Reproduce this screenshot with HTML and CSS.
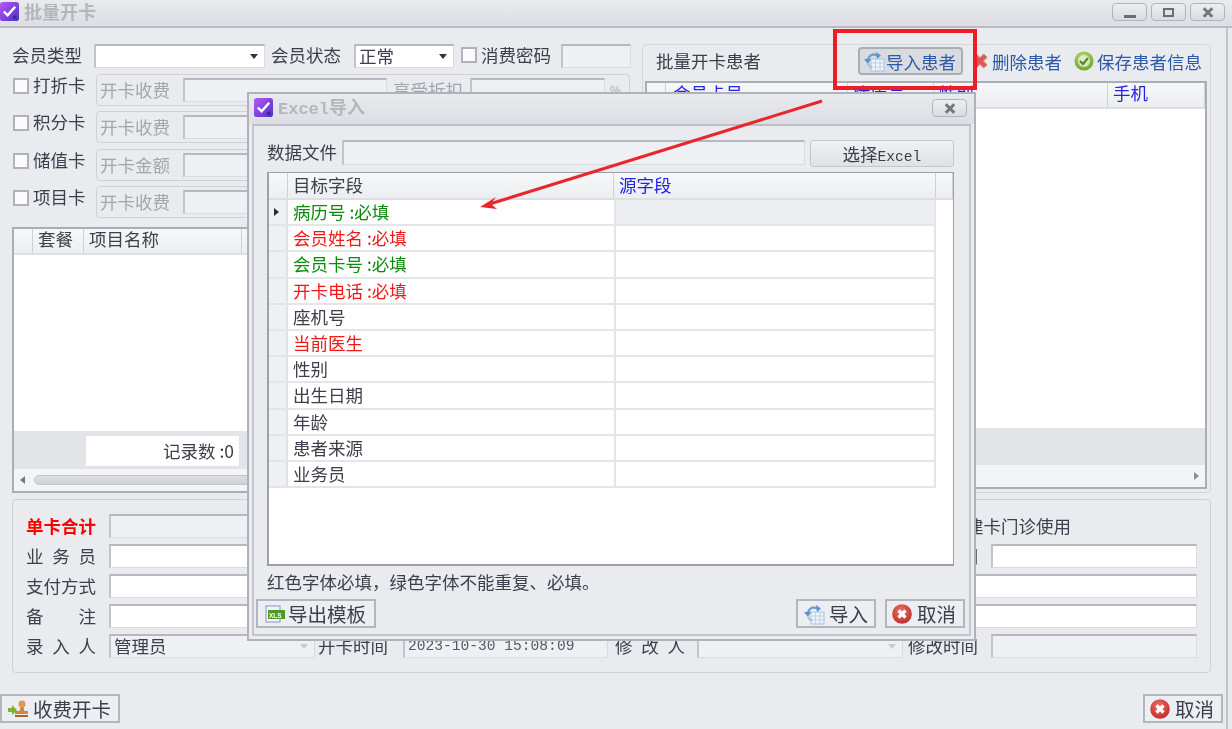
FILE: index.html
```html
<!DOCTYPE html>
<html lang="zh-CN">
<head>
<meta charset="utf-8">
<title>批量开卡</title>
<link rel="stylesheet" href="styles.css">
</head>
<body>
<svg class="defs" width="0" height="0">
  <defs>
    <linearGradient id="pg" x1="0" y1="0" x2="1" y2="1"><stop offset="0" stop-color="#b45cf5"/><stop offset="1" stop-color="#4f2fc8"/></linearGradient>
    <radialGradient id="rg" cx=".45" cy=".35" r=".75"><stop offset="0" stop-color="#f0716a"/><stop offset="1" stop-color="#b9231f"/></radialGradient>
    <radialGradient id="gg" cx=".45" cy=".35" r=".75"><stop offset="0" stop-color="#c5e27a"/><stop offset="1" stop-color="#5f9a22"/></radialGradient>
    <symbol id="i-app" viewBox="0 0 20 20">
      <rect x="0" y="0" width="20" height="20" rx="3" fill="url(#pg)"/>
      <path d="M4 10l4 4 8-9" fill="none" stroke="#fff" stroke-width="2.6"/>
      <circle cx="15.500" cy="16" r="2" fill="#3b2a9c"/>
    </symbol>
    <symbol id="i-import" viewBox="0 0 22 22">
      <rect x="8" y="9" width="13" height="12" fill="#eef4fb" stroke="#a9c2de"/>
      <path d="M8 13h13M8 17h13M12.500 9v12M17 9v12" stroke="#bcd0e6" stroke-width="1"/>
      <path d="M15 6C10 3 6 5 5 10" fill="none" stroke="#6a9fd6" stroke-width="2.4"/>
      <path d="M13 2l5 3.500-4 3.500zM1 9l4 5 3-5z" fill="#5a94cf"/>
      <path d="M5 14c1 2 2 3 4 4" fill="none" stroke="#9cc3e6" stroke-width="2"/>
    </symbol>
    <symbol id="i-del" viewBox="0 0 18 18">
      <path d="M3.500 3.500L14.500 14.500M14.500 3.500L3.500 14.500" stroke="#cfc9c6" stroke-width="6.500"/>
      <path d="M3.500 3.500L14.500 14.500M14.500 3.500L3.500 14.500" stroke="#dc5a52" stroke-width="4.500"/>
    </symbol>
    <symbol id="i-ok" viewBox="0 0 20 20">
      <circle cx="10" cy="10" r="9.500" fill="url(#gg)"/>
      <circle cx="10" cy="10" r="6" fill="#eef3e0" opacity=".75"/>
      <path d="M6 10l3 3 5-6" fill="none" stroke="#4f7f2a" stroke-width="2"/>
    </symbol>
    <symbol id="i-cancel" viewBox="0 0 20 20">
      <circle cx="10" cy="10" r="9.800" fill="url(#rg)"/>
      <path d="M6.500 6.500l7 7M13.500 6.500l-7 7" stroke="#fff" stroke-width="3.200"/>
    </symbol>
    <symbol id="i-xls" viewBox="0 0 20 18">
      <rect x="1" y="1" width="14" height="16" fill="#f2f5fb" stroke="#7f95c9"/>
      <rect x="3" y="5" width="17" height="9" fill="#4f9a22"/>
      <text x="4" y="12.500" class="xls-t">XLS</text>
    </symbol>
    <symbol id="i-stamp" viewBox="0 0 22 18">
      <circle cx="15" cy="4" r="3.500" fill="#d99a5a"/>
      <path d="M13.500 7h3l1 4h3.500v3h-13v-3h4.500z" fill="#d0873f"/>
      <rect x="8" y="15" width="13" height="2" fill="#a8652a"/>
      <path d="M1 8h4V5l5 5-5 5v-3H1z" fill="#7db52f"/>
    </symbol>
  </defs>
</svg>

<div class="window">
  <header class="titlebar">
    <svg class="ic-app"><use href="#i-app"/></svg>
    <span class="win-title">批量开卡</span>
    <div class="win-btns">
      <button class="wbtn"><i class="g-min"></i></button>
      <button class="wbtn"><i class="g-max"></i></button>
      <button class="wbtn"><span class="g-x"></span></button>
    </div>
  </header>

  <main class="client">
    <div class="top">
      <section class="left">
        <div class="row-type">
          <span class="lb">会员类型</span>
          <div class="combo c-type"></div>
          <span class="lb">会员状态</span>
          <div class="combo c-state">正常</div>
          <span class="chk"></span>
          <span class="lb">消费密码</span>
          <div class="inp dis w70"></div>
        </div>
        <div class="card-row">
          <span class="chk"></span><span class="lb card-lb">打折卡</span>
          <div class="gbox">
            <span class="lb gray gl">开卡收费</span><div class="inp dis w204"></div>
            <span class="lb gray dl">享受折扣</span><div class="inp dis w135"></div><span class="lb gray pct">%</span>
          </div>
        </div>
        <div class="card-row">
          <span class="chk"></span><span class="lb card-lb">积分卡</span>
          <div class="gbox"><span class="lb gray gl">开卡收费</span><div class="inp dis w204"></div></div>
        </div>
        <div class="card-row">
          <span class="chk"></span><span class="lb card-lb">储值卡</span>
          <div class="gbox"><span class="lb gray gl">开卡金额</span><div class="inp dis w204"></div></div>
        </div>
        <div class="card-row">
          <span class="chk"></span><span class="lb card-lb">项目卡</span>
          <div class="gbox"><span class="lb gray gl">开卡收费</span><div class="inp dis w204"></div></div>
        </div>
        <div class="grid left-grid">
          <div class="g-head lg-cols">
            <span></span><span>套餐</span><span>项目名称</span><span></span>
          </div>
          <div class="g-body"></div>
          <div class="g-foot"><div class="count">记录数 :0</div></div>
          <div class="g-scroll"><i class="arr-l"></i><div class="thumb"></div></div>
        </div>
      </section>

      <section class="right">
        <div class="toolbar">
          <span class="lb tb-title">批量开卡患者</span>
          <button class="tbtn pressed"><svg class="ic22"><use href="#i-import"/></svg>导入患者</button>
          <button class="tbtn t-del"><svg class="ic18"><use href="#i-del"/></svg>删除患者</button>
          <button class="tbtn t-save"><svg class="ic20"><use href="#i-ok"/></svg>保存患者信息</button>
        </div>
        <div class="grid right-grid">
          <div class="g-head rg-cols blue">
            <span></span><span>会员卡号</span><span>病历号</span><span>性别</span><span>手机</span>
          </div>
          <div class="g-body"></div>
          <div class="g-foot short"></div>
          <div class="g-scroll end"><i class="arr-r"></i></div>
        </div>
      </section>
    </div>

    <section class="bottom">
      <span class="lb red">单卡合计</span><div class="inp dis"></div>
      <span class="lb last-wide">建卡门诊使用</span>

      <span class="lb sp">业 务 员</span><div class="inp"></div>
      <span class="lb c7">有效日期</span><div class="inp"></div>

      <span class="lb sp">支付方式</span><div class="inp"></div>
      <div class="inp span5"></div>

      <span class="lb sp">备 注</span><div class="inp span7"></div>

      <span class="lb sp">录 入 人</span><div class="combo dis-c">管理员</div>
      <span class="lb c3">开卡时间</span><div class="inp dis mono">2023-10-30 15:08:09</div>
      <span class="lb c5 sp">修 改 人</span><div class="combo dis-c"></div>
      <span class="lb c7">修改时间</span><div class="inp dis"></div>
    </section>

    <footer class="actions">
      <button class="fbtn"><svg class="ic-st"><use href="#i-stamp"/></svg>收费开卡</button>
      <button class="fbtn"><svg class="ic20"><use href="#i-cancel"/></svg>取消</button>
    </footer>
  </main>

  <div class="dialog">
    <header class="d-title">
      <svg class="ic-app"><use href="#i-app"/></svg>
      <span class="win-title"><b class="mono-b">Excel</b>导入</span>
      <button class="wbtn d-close"><span class="g-x"></span></button>
    </header>
    <div class="d-client">
      <div class="d-file">
        <span class="lb">数据文件</span>
        <div class="inp file-inp"></div>
        <button class="pick">选择<span class="mono-s">Excel</span></button>
      </div>
      <div class="d-grid">
        <div class="d-head d-cols">
          <span></span><span>目标字段</span><span class="blue">源字段</span><span></span>
        </div>
        <div class="d-rows">
          <div class="d-row d-cols3 sel"><span class="ind"><i class="arr-cur"></i></span><span class="green">病历号 :必填</span><span class="src"></span></div>
          <div class="d-row d-cols3"><span class="ind"></span><span class="red-t">会员姓名 :必填</span><span class="src"></span></div>
          <div class="d-row d-cols3"><span class="ind"></span><span class="green">会员卡号 :必填</span><span class="src"></span></div>
          <div class="d-row d-cols3"><span class="ind"></span><span class="red-t">开卡电话 :必填</span><span class="src"></span></div>
          <div class="d-row d-cols3"><span class="ind"></span><span>座机号</span><span class="src"></span></div>
          <div class="d-row d-cols3"><span class="ind"></span><span class="red-t">当前医生</span><span class="src"></span></div>
          <div class="d-row d-cols3"><span class="ind"></span><span>性别</span><span class="src"></span></div>
          <div class="d-row d-cols3"><span class="ind"></span><span>出生日期</span><span class="src"></span></div>
          <div class="d-row d-cols3"><span class="ind"></span><span>年龄</span><span class="src"></span></div>
          <div class="d-row d-cols3"><span class="ind"></span><span>患者来源</span><span class="src"></span></div>
          <div class="d-row d-cols3"><span class="ind"></span><span>业务员</span><span class="src"></span></div>
        </div>
      </div>
      <p class="d-note">红色字体必填，绿色字体不能重复、必填。</p>
      <div class="d-actions">
        <button class="fbtn"><svg class="ic-xls"><use href="#i-xls"/></svg>导出模板</button>
        <span class="grow"></span>
        <button class="fbtn"><svg class="ic22"><use href="#i-import"/></svg>导入</button>
        <button class="fbtn"><svg class="ic20"><use href="#i-cancel"/></svg>取消</button>
      </div>
    </div>
  </div>

  <div class="callout"></div>
  <svg class="arrow" width="1232" height="729" viewBox="0 0 1232 729">
    <path d="M822 101L488 204.500" stroke="#e8262c" stroke-width="3" fill="none"/>
    <path d="M480 207L496 197 491 204 497 209z" fill="#e8262c"/>
  </svg>
</div>
</body>
</html>
```
FILE: styles.css
```css
* { box-sizing: border-box; }
html, body { margin: 0; padding: 0; }
body {
  width: 1232px; height: 729px; overflow: hidden;
  font-family: "Noto Sans CJK SC", "Liberation Sans", sans-serif;
  font-size: 17.500px; color: #3d404c; background: #e9ebef;
}
button { font: inherit; color: inherit; padding: 0; }
.defs { position: absolute; }
.xls-t { font: bold 6.500px "Liberation Sans", sans-serif; fill: #fff; }

.window {
  position: relative; width: 1232px; height: 729px; overflow: hidden;
  background: #e9ebef; filter: blur(.4px);
}

.titlebar {
  height: 28px; display: flex; align-items: center; padding-bottom: 4px;
  background: linear-gradient(#e9eaee, #dcdee3);
  border-bottom: 2px solid #b9bbc3;
}
.ic-app { width: 19px; height: 19px; flex: none; }
.titlebar .ic-app { margin-right: 5px; }
.win-title { font-size: 18px; font-weight: 700; color: #b4b6bc; line-height: 22px; }
.mono-b { font: 700 17px "Liberation Mono", monospace; }
.win-btns { margin: 3px 7px 0 auto; align-self: flex-start; display: flex; gap: 4px; }
.wbtn {
  width: 35px; height: 18px; border: 1px solid #b2b4bb; border-radius: 4px;
  background: linear-gradient(#eceef1, #d9dbe0);
  display: flex; align-items: center; justify-content: center;
}
.g-min { width: 12px; height: 3px; margin-top: 8px; background: #6a6d76; display: block; }
.g-max { width: 11px; height: 9px; border: 2px solid #6a6d76; display: block; }
.g-x { width: 12px; height: 12px; display: block; position: relative; }
.g-x::before, .g-x::after {
  content: ""; position: absolute; left: 0; top: 4.500px; width: 12px; height: 3px; background: #74777f;
}
.g-x::before { transform: rotate(45deg); }
.g-x::after { transform: rotate(-45deg); }

.client {
  width: 1228px; height: 701px; padding: 16px 15px 0 12px;
  border-right: 2px solid #c2c4cb;
}
.lb { white-space: nowrap; flex: none; line-height: 24px; }
.gray { color: #a4a6ad; }

.inp {
  height: 24px; min-width: 0; background: #fff; line-height: 20px; padding-left: 3px;
  border: 1px solid #d9dbe0; border-top: 2px solid #b6b8c0; border-left: 2px solid #c2c4cb;
  white-space: nowrap;
}
.dis { background: #eff0f3; }
.w70 { width: 70px; margin-left: 10px; }
.w204 { width: 204px; margin-left: 13px; }
.w135 { width: 135px; margin-left: 7px; }
.mono { font: 14.600px/20px "Liberation Mono", monospace; color: #555863; }

.combo {
  position: relative; height: 24px; background: #fff; line-height: 20px; padding-left: 3px;
  border: 1px solid #d9dbe0; border-top: 2px solid #b6b8c0; border-left: 2px solid #c2c4cb;
}
.combo::after {
  content: ""; position: absolute; right: 6px; top: 8px;
  border: 4px solid transparent; border-top: 5px solid #33353d; border-bottom: 0;
}
.dis-c { background: #eff0f3; }
.dis-c::after { border-top-color: #c9cbd1; }

.top { display: grid; grid-template-columns: 620px 569px; column-gap: 10px; height: 449px; }

.left { display: flex; flex-direction: column; min-width: 0; }
.row-type { display: flex; align-items: flex-start; height: 24px; margin-bottom: 6px; }
.row-type .lb { line-height: 22px; }
.row-type .chk { margin-top: 3px; }
.c-type { width: 171px; margin: 0 6px 0 12px; }
.c-state { width: 100px; margin: 0 7px 0 13px; }
.chk {
  width: 16px; height: 16px; flex: none; background: #fbfbfc;
  border: 2px solid #b0b2ba; margin-right: 4px;
}
.card-row { display: flex; align-items: flex-start; height: 32px; margin-bottom: 5.330px; padding-left: 1px; }
.card-row .chk { margin-top: 4px; }
.card-lb { width: 63px; line-height: 22px; }
.gbox {
  width: 534px; height: 32px; padding: 3px 0 0 3px; display: flex; align-items: flex-start;
  border: 1px solid #cfd1d7; border-radius: 4px;
}
.gl { width: 70px; }
.dl { margin-left: 6px; }
.pct { margin-left: 5px; font-size: 12px; }

.grid { display: flex; flex-direction: column; border: 2px solid #abadb5; background: #fff; }
.left-grid { height: 266px; margin-top: 3.670px; }
.g-head {
  height: 26px; flex: none; display: grid;
  background: linear-gradient(#f6f7f8, #eceef1);
  border-bottom: 2px solid #dcdee3; line-height: 20px;
}
.g-head span { padding-left: 5px; border-right: 1px solid #cfd1d6; white-space: nowrap; }
.lg-cols { grid-template-columns: 19px 51px 158px 1fr; }
.rg-cols { grid-template-columns: 19px 182px 86px 174px 1fr; }
.g-body { flex: 1; background: #fff; }
.g-foot { height: 38px; flex: none; background: #e3e4e8; padding: 4px 0 0 71px; }
.g-foot.short { height: 37px; }
.count {
  width: 155px; height: 32px; background: #fff; border: 1px solid #e0e2e6;
  text-align: right; line-height: 30px; padding-right: 5px;
}
.g-scroll { height: 22px; flex: none; background: #f3f4f6; display: flex; align-items: center; padding-left: 6px; }
.g-scroll.end { justify-content: flex-end; padding: 0 6px 0 0; }
.arr-l { border: 4px solid transparent; border-right: 5px solid #777a83; border-left: 0; flex: none; }
.arr-r { border: 4px solid transparent; border-left: 5px solid #8b8e96; border-right: 0; flex: none; }
.thumb {
  flex: 1; height: 10px; margin-left: 9px; border-radius: 5px;
  background: linear-gradient(#dcdee2, #cfd1d6); border: 1px solid #c3c5cb;
}

.right { border: 1px solid #d3d5da; border-radius: 4px; padding: 0 3px 3px 2px; display: flex; flex-direction: column; }
.toolbar { height: 36px; flex: none; display: flex; align-items: flex-start; padding-top: 2px; color: #2d5aa8; }
.tb-title { color: #3d404c; margin-left: 11px; width: 202px; line-height: 28px; }
.tbtn { display: flex; align-items: center; height: 28px; border: 0; background: none; color: #2d5aa8; white-space: nowrap; }
.pressed {
  width: 105px; padding-left: 3px;
  border: 2px solid #abadb5; border-radius: 4px; background: #d9dbe0;
}
.pressed .ic22 { margin-right: 1px; }
.t-del { margin-left: 8px; }
.t-save { margin-left: 12px; }
.ic22 { width: 22px; height: 22px; flex: none; margin-right: 2px; }
.ic18 { width: 18px; height: 18px; flex: none; margin-right: 3px; }
.ic20 { width: 20px; height: 20px; flex: none; margin-right: 3px; }
.ic-st { width: 22px; height: 18px; flex: none; margin-right: 4px; }
.ic-xls { width: 20px; height: 18px; flex: none; margin: 0 3px 0 2px; }
.right-grid { flex: 1; }
.blue { color: #2424e6; }
.rg-cols span:nth-child(2) { padding-left: 7px; }

.bottom {
  height: 174px; margin-top: 6px; padding: 14px 13px 0 13px;
  border: 1px solid #cfd1d7; border-radius: 4px;
  display: grid; row-gap: 6px; grid-auto-rows: 24px;
  grid-template-columns: 83px 206px 88px 205px 89px 206px 88px 206px;
}
.red { color: #f00; font-weight: 700; }
.sp { width: 70px; text-align-last: justify; }
.c3 { grid-column: 3; margin-left: 3px; }
.c5 { grid-column: 5; margin-left: 7px; }
.c7 { grid-column: 7; margin-left: 5px; }
.last-wide { grid-column: 7 / 9; margin-left: 63px; }
.span5 { grid-column: 4 / 9; }
.span7 { grid-column: 2 / 9; }

.actions { display: flex; justify-content: space-between; margin: 21px -12px 0 -12px; }
.fbtn {
  height: 29px; display: flex; align-items: center; padding: 0 4px 0 5px; font-size: 19.500px;
  border: 2px solid #b4b6bd; background: #eceef1; white-space: nowrap;
}
.fbtn .ic20 { margin-right: 5px; }
.actions .fbtn { min-width: 80px; }
.actions .fbtn:first-child { width: 120px; }

.dialog {
  position: absolute; left: 247px; top: 92px; width: 729px; height: 549px;
  background: #e9ebef; border: 2px solid #b0b2bb;
  display: flex; flex-direction: column;
}
.d-title {
  height: 30px; flex: none; display: flex; align-items: center; padding: 0 0 4px 5px;
  background: linear-gradient(#e9eaee, #dcdee3);
}
.d-title .ic-app { margin-right: 5px; }
.d-close { margin: 2px 7px 0 auto; }
.d-client {
  flex: 1; margin: 0 3px 3px; padding-top: 14px; background: #e9ebef;
  border: 2px solid #c3c5cc; border-top-color: #bcbec6;
  display: flex; flex-direction: column;
}
.d-file { display: flex; gap: 5px; margin: 0 15px 0 13px; height: 27px; }
.file-inp { flex: 1; height: 25px; background: #eff0f3; }
.pick {
  width: 144px; height: 27px; border: 1px solid #c4c6cc; border-radius: 3px;
  background: linear-gradient(#f0f1f3, #dfe1e5);
}
.mono-s { font: 14.600px "Liberation Mono", monospace; }
.d-grid {
  height: 394px; margin: 5px 15px 0 13px; background: #fff;
  border: 1px solid #9fa1aa; border-width: 1px 1px 2px 2px;
}
.d-head {
  height: 27px; display: grid; line-height: 24px;
  background: linear-gradient(#f6f7f8, #eceef1); border-bottom: 2px solid #dcdee3;
}
.d-head span { padding-left: 5px; border-right: 1px solid #cfd1d6; }
.d-cols { grid-template-columns: 19px 326px 322px 1fr; }
.d-rows { width: 667px; }
.d-row { height: 26.200px; line-height: 24px; display: grid; border-bottom: 2px solid #e3e5e9; }
.d-cols3 { grid-template-columns: 19px 326px 322px; }
.d-row > span { padding-left: 5px; }
.ind { background: #eef0f3; border-right: 2px solid #e0e2e6; display: flex; align-items: center; }
.src { border-left: 2px solid #e3e5e9; border-right: 2px solid #e3e5e9; }
.sel .src { background: #eceef1; }
.arr-cur { border: 4px solid transparent; border-left: 5px solid #2a2c33; border-right: 0; display: block; }
.green { color: #0a8a0a; }
.red-t { color: #f01818; }
.d-note { margin: 4px 13px 0; line-height: 24px; height: 24px; white-space: nowrap; }
.d-actions { display: flex; gap: 9px; margin: 5px 4px 0 2px; }
.d-actions .fbtn:first-child { width: 120px; }
.d-actions .fbtn:not(:first-child) { width: 80px; }
.d-actions .ic22 { margin-right: 4px; }
.grow { flex: 1; }

.callout {
  position: absolute; left: 833px; top: 29px; width: 144px; height: 61px;
  border: 4px solid #ee1c25; pointer-events: none;
}
.arrow { position: absolute; left: 0; top: 0; pointer-events: none; }
```
